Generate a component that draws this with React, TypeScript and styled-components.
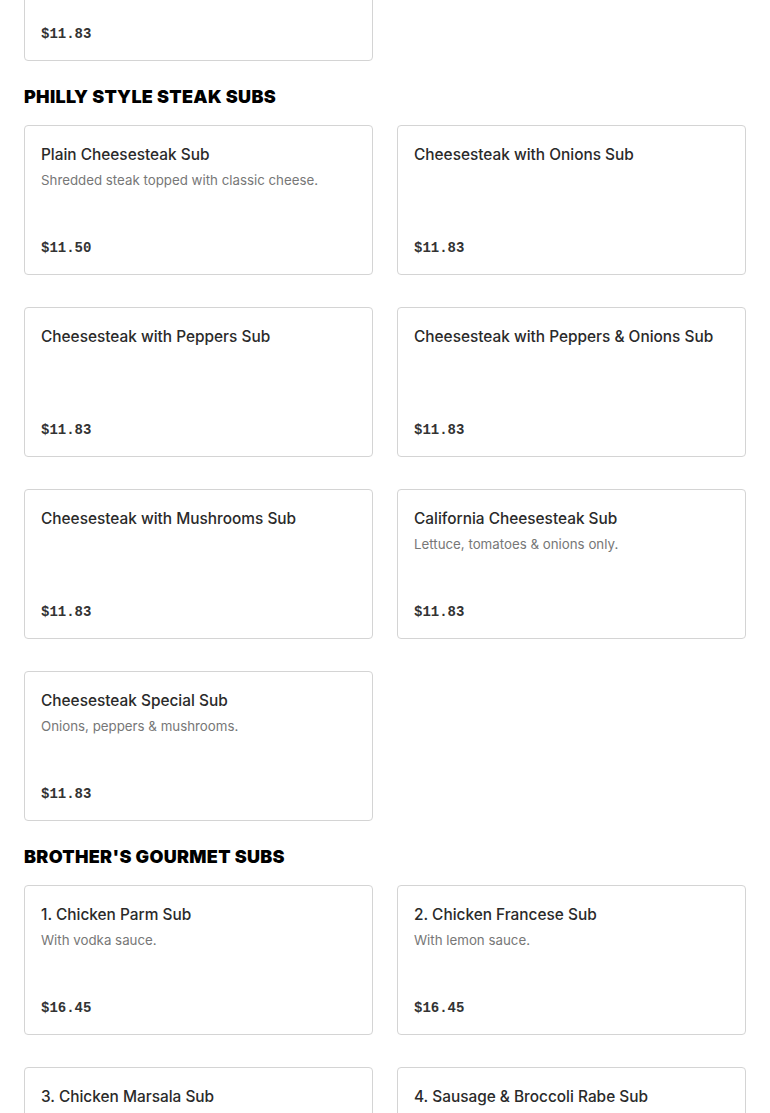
import React from "react";
import styled, { createGlobalStyle } from "styled-components";

const GlobalStyle = createGlobalStyle`
  html, body { margin: 0; padding: 0; background: #ffffff; }
  body { overflow: hidden; }
`;

const Page = styled.main`
  padding: 0 24px;
  margin-top: -89px;
  font-family: Inter, "Noto Sans", sans-serif;
  color: #2b2b2b;
`;

const Section = styled.section`
  display: flex;
  flex-direction: column;
`;

const SectionTitle = styled.h2`
  margin: 25px 0 17px;
  font-family: Inter, "Liberation Sans", sans-serif;
  font-weight: 900;
  font-size: 18px;
  line-height: 22px;
  letter-spacing: 0.3px;
  color: #000;
  text-transform: uppercase;
`;

const Grid = styled.div`
  display: grid;
  grid-template-columns: 1fr 1fr;
  column-gap: 24px;
  row-gap: 32px;
`;

const Card = styled.article`
  box-sizing: border-box;
  height: 150px;
  border: 1px solid #d4d4d4;
  border-radius: 4px;
  padding: 17px 16px 14px;
  display: flex;
  flex-direction: column;
  background: #fff;
`;

const ItemName = styled.h3`
  margin: 0;
  font-size: 15.4px;
  line-height: 24px;
  font-weight: 500;
  color: #2a2a2a;
`;

const ItemDesc = styled.p`
  margin: 3px 0 0;
  font-size: 13.3px;
  line-height: 20px;
  color: #777777;
`;

const Price = styled.span`
  margin-top: auto;
  font-family: "Liberation Mono", "DejaVu Sans Mono", monospace;
  font-weight: 700;
  font-size: 14px;
  line-height: 24px;
  color: #333333;
`;

type Item = { name: string; desc?: string; price: string };

const MenuCard = ({ item }: { item: Item }) => (
  <Card>
    <ItemName>{item.name}</ItemName>
    {item.desc && <ItemDesc>{item.desc}</ItemDesc>}
    <Price>{item.price}</Price>
  </Card>
);

const previous: Item[] = [{ name: "Steak Sub", price: "$11.83" }];

const philly: Item[] = [
  { name: "Plain Cheesesteak Sub", desc: "Shredded steak topped with classic cheese.", price: "$11.50" },
  { name: "Cheesesteak with Onions Sub", price: "$11.83" },
  { name: "Cheesesteak with Peppers Sub", price: "$11.83" },
  { name: "Cheesesteak with Peppers & Onions Sub", price: "$11.83" },
  { name: "Cheesesteak with Mushrooms Sub", price: "$11.83" },
  { name: "California Cheesesteak Sub", desc: "Lettuce, tomatoes & onions only.", price: "$11.83" },
  { name: "Cheesesteak Special Sub", desc: "Onions, peppers & mushrooms.", price: "$11.83" },
];

const gourmet: Item[] = [
  { name: "1. Chicken Parm Sub", desc: "With vodka sauce.", price: "$16.45" },
  { name: "2. Chicken Francese Sub", desc: "With lemon sauce.", price: "$16.45" },
  { name: "3. Chicken Marsala Sub", price: "$16.45" },
  { name: "4. Sausage & Broccoli Rabe Sub", price: "$16.45" },
];

export default function App() {
  return (
    <>
      <GlobalStyle />
      <Page>
        <Section>
          <Grid>
            {previous.map((it) => (
              <MenuCard key={it.name} item={it} />
            ))}
          </Grid>
        </Section>
        <Section>
          <SectionTitle>Philly Style Steak Subs</SectionTitle>
          <Grid>
            {philly.map((it) => (
              <MenuCard key={it.name} item={it} />
            ))}
          </Grid>
        </Section>
        <Section>
          <SectionTitle>Brother's Gourmet Subs</SectionTitle>
          <Grid>
            {gourmet.map((it) => (
              <MenuCard key={it.name} item={it} />
            ))}
          </Grid>
        </Section>
      </Page>
    </>
  );
}
